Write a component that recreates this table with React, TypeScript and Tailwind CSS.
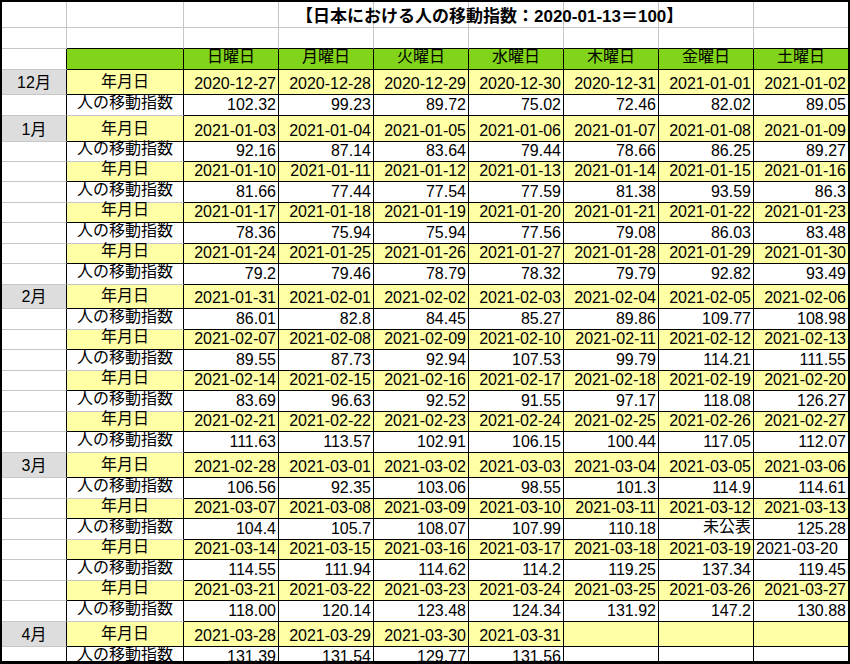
import React from 'react';

type Week = {
  month?: string;
  dh: string;
  ih: string;
  dates: string[];
  vals: string[];
};

const DAYS = ['日曜日', '月曜日', '火曜日', '水曜日', '木曜日', '金曜日', '土曜日'];

const WEEKS: Week[] = [
  {
    month: '12月', dh: 'h-[25px]', ih: 'h-[21px]',
    dates: ['2020-12-27', '2020-12-28', '2020-12-29', '2020-12-30', '2020-12-31', '2021-01-01', '2021-01-02'],
    vals: ['102.32', '99.23', '89.72', '75.02', '72.46', '82.02', '89.05'],
  },
  {
    month: '1月', dh: 'h-[26px]', ih: 'h-[20px]',
    dates: ['2021-01-03', '2021-01-04', '2021-01-05', '2021-01-06', '2021-01-07', '2021-01-08', '2021-01-09'],
    vals: ['92.16', '87.14', '83.64', '79.44', '78.66', '86.25', '89.27'],
  },
  {
    dh: 'h-[20px]', ih: 'h-[21px]',
    dates: ['2021-01-10', '2021-01-11', '2021-01-12', '2021-01-13', '2021-01-14', '2021-01-15', '2021-01-16'],
    vals: ['81.66', '77.44', '77.54', '77.59', '81.38', '93.59', '86.3'],
  },
  {
    dh: 'h-[20px]', ih: 'h-[21px]',
    dates: ['2021-01-17', '2021-01-18', '2021-01-19', '2021-01-20', '2021-01-21', '2021-01-22', '2021-01-23'],
    vals: ['78.36', '75.94', '75.94', '77.56', '79.08', '86.03', '83.48'],
  },
  {
    dh: 'h-[20px]', ih: 'h-[21px]',
    dates: ['2021-01-24', '2021-01-25', '2021-01-26', '2021-01-27', '2021-01-28', '2021-01-29', '2021-01-30'],
    vals: ['79.2', '79.46', '78.79', '78.32', '79.79', '92.82', '93.49'],
  },
  {
    month: '2月', dh: 'h-[24px]', ih: 'h-[21px]',
    dates: ['2021-01-31', '2021-02-01', '2021-02-02', '2021-02-03', '2021-02-04', '2021-02-05', '2021-02-06'],
    vals: ['86.01', '82.8', '84.45', '85.27', '89.86', '109.77', '108.98'],
  },
  {
    dh: 'h-[20px]', ih: 'h-[21px]',
    dates: ['2021-02-07', '2021-02-08', '2021-02-09', '2021-02-10', '2021-02-11', '2021-02-12', '2021-02-13'],
    vals: ['89.55', '87.73', '92.94', '107.53', '99.79', '114.21', '111.55'],
  },
  {
    dh: 'h-[20px]', ih: 'h-[21px]',
    dates: ['2021-02-14', '2021-02-15', '2021-02-16', '2021-02-17', '2021-02-18', '2021-02-19', '2021-02-20'],
    vals: ['83.69', '96.63', '92.52', '91.55', '97.17', '118.08', '126.27'],
  },
  {
    dh: 'h-[20px]', ih: 'h-[21px]',
    dates: ['2021-02-21', '2021-02-22', '2021-02-23', '2021-02-24', '2021-02-25', '2021-02-26', '2021-02-27'],
    vals: ['111.63', '113.57', '102.91', '106.15', '100.44', '117.05', '112.07'],
  },
  {
    month: '3月', dh: 'h-[25px]', ih: 'h-[21px]',
    dates: ['2021-02-28', '2021-03-01', '2021-03-02', '2021-03-03', '2021-03-04', '2021-03-05', '2021-03-06'],
    vals: ['106.56', '92.35', '103.06', '98.55', '101.3', '114.9', '114.61'],
  },
  {
    dh: 'h-[20px]', ih: 'h-[21px]',
    dates: ['2021-03-07', '2021-03-08', '2021-03-09', '2021-03-10', '2021-03-11', '2021-03-12', '2021-03-13'],
    vals: ['104.4', '105.7', '108.07', '107.99', '110.18', '未公表', '125.28'],
  },
  {
    dh: 'h-[20px]', ih: 'h-[21px]',
    dates: ['2021-03-14', '2021-03-15', '2021-03-16', '2021-03-17', '2021-03-18', '2021-03-19', '2021-03-20'],
    vals: ['114.55', '111.94', '114.62', '114.2', '119.25', '137.34', '119.45'],
  },
  {
    dh: 'h-[20px]', ih: 'h-[21px]',
    dates: ['2021-03-21', '2021-03-22', '2021-03-23', '2021-03-24', '2021-03-25', '2021-03-26', '2021-03-27'],
    vals: ['118.00', '120.14', '123.48', '124.34', '131.92', '147.2', '130.88'],
  },
  {
    month: '4月', dh: 'h-[25px]', ih: 'h-[21px]',
    dates: ['2021-03-28', '2021-03-29', '2021-03-30', '2021-03-31', '', '', ''],
    vals: ['131.39', '131.54', '129.77', '131.56', '', '', ''],
  },
];

const base =
  'flex items-end whitespace-nowrap px-[2px] leading-[18px] text-[16px] text-black';

function Cell({ className, children }: { className: string; children?: React.ReactNode }) {
  return <div className={`${base} ${className}`}>{children}</div>;
}

const gray = 'border-r border-b border-r-[#c6c6c6] border-b-[#c6c6c6]';
const grayLast = 'border-b border-b-[#c6c6c6]';

export default function App() {
  return (
    <div
      className="w-[850px] h-[664px] overflow-hidden bg-white border-2 border-b-[3px] border-black"
      style={{ fontFamily: '"Liberation Sans", "Noto Sans CJK JP", sans-serif' }}
    >
      <div className="grid grid-cols-[65px_117px_95px_95px_95px_95px_95px_95px_94px]">
        {/* Row 1: title */}
        {Array.from({ length: 9 }).map((_, i) =>
          i === 3 ? (
            <div
              key={i}
              className={`flex items-end whitespace-nowrap overflow-visible h-[26px] pl-[17px] pb-[1px] leading-[18px] text-[17px] font-bold text-black ${gray}`}
            >
              <span className="relative z-10">【日本における人の移動指数：2020-01-13＝100】</span>
            </div>
          ) : (
            <div key={i} className={`h-[26px] ${i === 8 ? grayLast : gray}`} />
          )
        )}

        {/* Row 2: blank */}
        {Array.from({ length: 9 }).map((_, i) => (
          <div
            key={i}
            className={`h-[21px] ${
              i === 0
                ? gray
                : i === 8
                ? 'border-b border-b-black'
                : 'border-r border-b border-r-[#c6c6c6] border-b-black'
            }`}
          />
        ))}

        {/* Row 3: header */}
        <div className="h-[21px] border-r border-b border-r-black border-b-[#c6c6c6]" />
        <div className="h-[21px] bg-[#81d41a] border-r border-b border-black" />
        {DAYS.map((d, i) => (
          <Cell
            key={d}
            className={`h-[21px] justify-center pb-[3px] bg-[#81d41a] ${
              i === 6 ? 'border-b border-black' : 'border-r border-b border-black'
            }`}
          >
            {d}
          </Cell>
        ))}

        {WEEKS.map((w, wi) => (
          <React.Fragment key={wi}>
            {/* date row */}
            <Cell
              className={`${w.dh} justify-center pb-[2px] border-r border-b border-r-black border-b-[#c6c6c6] ${
                w.month ? 'bg-[#dddddd]' : 'bg-white'
              }`}
            >
              {w.month ?? ''}
            </Cell>
            <Cell className={`${w.dh} justify-center pb-[3px] bg-[#ffffa6] border-r border-b border-black`}>
              年月日
            </Cell>
            {w.dates.map((d, i) => {
              const special = d === '2021-03-20';
              return (
                <Cell
                  key={i}
                  className={`${w.dh} pb-[1px] ${special ? 'justify-start bg-white' : 'justify-end bg-[#ffffa6]'} ${
                    i === 6 ? 'border-b border-black' : 'border-r border-b border-black'
                  }`}
                >
                  {d}
                </Cell>
              );
            })}

            {/* index row */}
            <Cell className={`${w.ih} bg-white border-r border-b border-r-black border-b-[#c6c6c6]`} />
            <Cell
              className={`${w.ih} justify-center pb-[3px] bg-white border-r border-b border-r-black border-b-[#c6c6c6]`}
            >
              人の移動指数
            </Cell>
            {w.vals.map((v, i) => (
              <Cell
                key={i}
                className={`${w.ih} justify-end ${v === '未公表' ? 'pb-[3px]' : 'pb-[1px]'} bg-white ${
                  i === 6 ? 'border-b border-black' : 'border-r border-b border-black'
                }`}
              >
                {v}
              </Cell>
            ))}
          </React.Fragment>
        ))}
      </div>
    </div>
  );
}
